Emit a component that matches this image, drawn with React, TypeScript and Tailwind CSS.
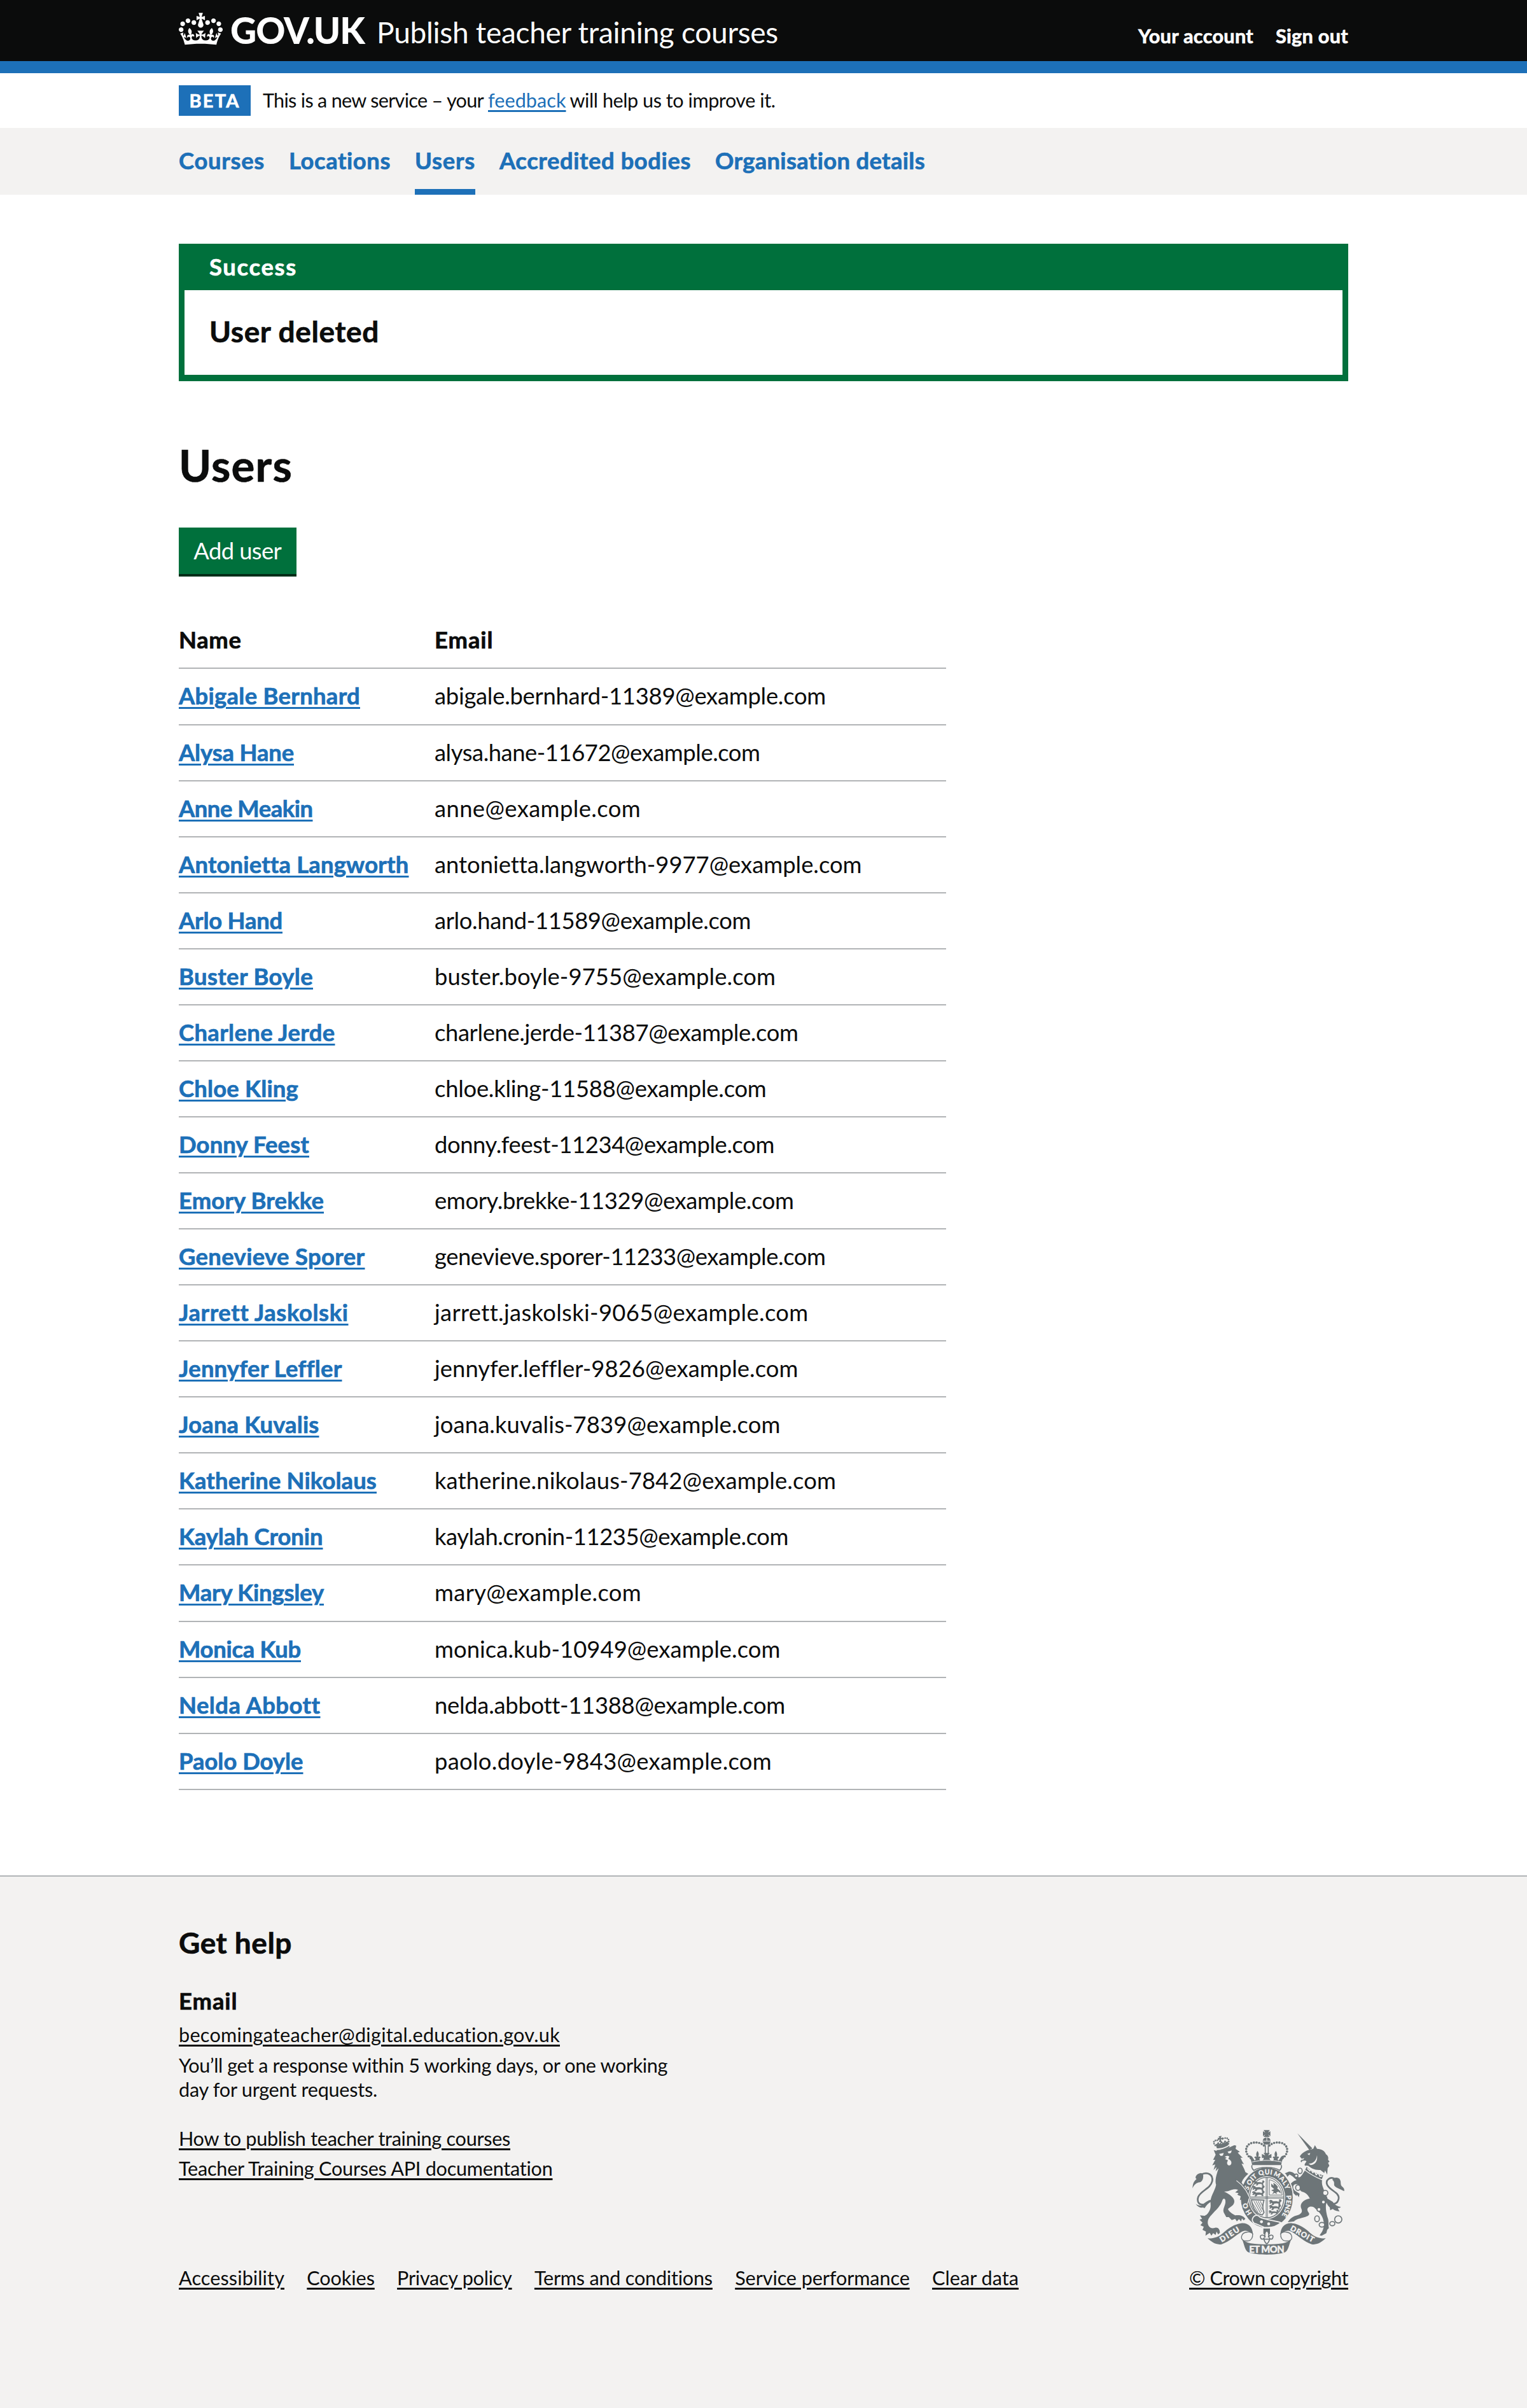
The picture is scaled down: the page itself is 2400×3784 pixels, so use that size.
import React, { useLayoutEffect, useRef, useState } from 'react';

/** Text whose letter spacing is worked out so that the line takes the given width. */
function Fit({ w, children, className = '' }: { w: number; children: string; className?: string }) {
  const ref = useRef<HTMLSpanElement>(null);
  const [spacing, setSpacing] = useState(0);
  useLayoutEffect(() => {
    const el = ref.current;
    if (!el) return;
    const natural = el.getBoundingClientRect().width - spacing * children.length;
    setSpacing((w - natural) / children.length);
  }, [w, children]);
  return (
    <span ref={ref} className={`whitespace-nowrap ${className}`} style={{ letterSpacing: `${spacing}px` }}>
      {children}
    </span>
  );
}

const underline = 'underline decoration-[2.5px] underline-offset-[4px]';
const bold = 'font-bold [-webkit-text-stroke:0.7px]';

const nav: [string, number][] = [
  ['Courses', 135],
  ['Locations', 160],
  ['Users', 95],
  ['Accredited bodies', 301],
  ['Organisation details', 330],
];

const users: [string, number, string, number][] = [
  ['Abigale Bernhard', 285, 'abigale.bernhard-11389@example.com', 615],
  ['Alysa Hane', 181, 'alysa.hane-11672@example.com', 511.5],
  ['Anne Meakin', 210.5, 'anne@example.com', 324],
  ['Antonietta Langworth', 361.5, 'antonietta.langworth-9977@example.com', 671.5],
  ['Arlo Hand', 163, 'arlo.hand-11589@example.com', 497],
  ['Buster Boyle', 211, 'buster.boyle-9755@example.com', 536],
  ['Charlene Jerde', 245.5, 'charlene.jerde-11387@example.com', 571.5],
  ['Chloe Kling', 188, 'chloe.kling-11588@example.com', 521.5],
  ['Donny Feest', 205, 'donny.feest-11234@example.com', 534],
  ['Emory Brekke', 228, 'emory.brekke-11329@example.com', 564.5],
  ['Genevieve Sporer', 292.5, 'genevieve.sporer-11233@example.com', 614.5],
  ['Jarrett Jaskolski', 266.5, 'jarrett.jaskolski-9065@example.com', 587.5],
  ['Jennyfer Leffler', 256.5, 'jennyfer.leffler-9826@example.com', 571.5],
  ['Joana Kuvalis', 220.5, 'joana.kuvalis-7839@example.com', 543.5],
  ['Katherine Nikolaus', 311, 'katherine.nikolaus-7842@example.com', 631],
  ['Kaylah Cronin', 226.5, 'kaylah.cronin-11235@example.com', 556],
  ['Mary Kingsley', 228, 'mary@example.com', 325],
  ['Monica Kub', 192, 'monica.kub-10949@example.com', 543.5],
  ['Nelda Abbott', 222.5, 'nelda.abbott-11388@example.com', 551],
  ['Paolo Doyle', 195.5, 'paolo.doyle-9843@example.com', 530],
];

const footerLinks: [string, number][] = [
  ['Accessibility', 166],
  ['Cookies', 106.5],
  ['Privacy policy', 180.5],
  ['Terms and conditions', 280],
  ['Service performance', 274.5],
  ['Clear data', 136],
];

function CrownLogo() {
  return (
    <svg viewBox="0 0 132 97" className="mt-[20px] h-[51px] w-[69px]" fill="currentColor" aria-hidden="true">
      <path
        fillRule="evenodd"
        d="M25 30.2c3.5 1.5 7.7-.2 9.1-3.7 1.5-3.6-.2-7.8-3.9-9.2-3.6-1.4-7.6.3-9.1 3.9-1.4 3.5.3 7.5 3.9 9zM9 39.5c3.6 1.5 7.8-.2 9.2-3.7 1.5-3.6-.2-7.8-3.9-9.1-3.6-1.5-7.6.2-9.1 3.8-1.4 3.5.3 7.5 3.8 9zM4.4 57.2c3.5 1.5 7.7-.2 9.1-3.8 1.5-3.6-.2-7.7-3.9-9.1-3.5-1.5-7.6.3-9.1 3.8-1.4 3.5.3 7.6 3.9 9.1zm38.3-21.4c3.5 1.5 7.7-.2 9.1-3.8 1.5-3.6-.2-7.7-3.9-9.1-3.6-1.5-7.6.3-9.1 3.8-1.3 3.6.4 7.7 3.9 9.1zm64.4-5.6c-3.6 1.5-7.8-.2-9.1-3.7-1.5-3.6.2-7.8 3.8-9.2 3.6-1.4 7.7.3 9.2 3.9 1.3 3.5-.4 7.5-3.9 9zm15.9 9.3c-3.6 1.5-7.7-.2-9.1-3.7-1.5-3.6.2-7.8 3.7-9.1 3.6-1.5 7.7.2 9.2 3.8 1.5 3.5-.3 7.5-3.8 9zm4.7 17.7c-3.6 1.5-7.8-.2-9.2-3.8-1.5-3.6.2-7.7 3.9-9.1 3.6-1.5 7.7.3 9.2 3.8 1.3 3.5-.4 7.6-3.9 9.1zM89.3 35.8c-3.6 1.5-7.8-.2-9.2-3.8-1.4-3.6.2-7.7 3.9-9.1 3.6-1.5 7.7.3 9.2 3.8 1.4 3.6-.3 7.7-3.9 9.1zM69.7 17.7l8.9 4.7V9.3l-8.9 2.8c-.2-.3-.5-.6-.9-.9L72.4 0H59.6l3.5 11.2c-.3.3-.6.5-.9.9l-8.8-2.8v13.1l8.8-4.7c.3.3.6.7.9.9l-5 15.4v.1c-.2.8-.4 1.6-.4 2.4 0 4.1 3.1 7.5 7 8.1h.2c.3 0 .7.1 1 .1.4 0 .7 0 1-.1h.2c4-.6 7.1-4.1 7.1-8.1 0-.8-.1-1.7-.4-2.4V34l-5.1-15.4c.4-.2.7-.6 1-.9zM66 92.8c16.9 0 32.8 1.1 47.1 3.2 4-16.9 8.9-26.7 14-33.5l-9.6-3.4c1 4.9 1.1 7.2 0 10.2-1.5-1.4-3-4.3-4.2-8.7L108.6 76c2.8-2 5-3.2 7.5-3.3-4.4 9.4-10 11.9-13.6 11.2-4.3-.8-6.3-4.6-5.6-7.9 1-4.7 5.7-5.9 8-.5 4.3-8.7-3-11.4-7.6-8.8 7.1-7.2 7.9-13.5 2.1-21.1-8 6.1-8.1 12.3-4.5 20.8-4.7-5.4-12.1-2.5-9.5 6.2 3.4-5.2 7.9-2 7.2 3.1-.6 4.3-6.4 7.8-13.5 7.2-10.3-.9-10.9-8-11.2-13.8 2.5-.5 7.1 1.8 11 7.3L80.2 60c-4.1 4.4-8 5.3-12.3 5.4 1.4-4.4 8-11.6 8-11.6H55.5s6.4 7.2 7.9 11.6c-4.2-.1-8-1-12.3-5.4l1.4 16.4c3.9-5.5 8.5-7.7 10.9-7.3-.3 5.8-.9 12.8-11.1 13.8-7.2.6-12.9-2.9-13.5-7.2-.7-5 3.8-8.3 7.1-3.1 2.7-8.7-4.6-11.6-9.4-6.2 3.7-8.5 3.6-14.7-4.6-20.8-5.8 7.6-5 13.9 2.2 21.1-4.7-2.6-11.9.1-7.7 8.8 2.3-5.5 7.1-4.2 8.1.5.7 3.3-1.3 7.1-5.7 7.9-3.5.7-9-1.8-13.5-11.2 2.5.1 4.7 1.3 7.5 3.3l-4.7-15.4c-1.2 4.4-2.7 7.2-4.3 8.7-1.1-3-.9-5.3 0-10.2l-9.5 3.4c5 6.9 9.9 16.7 14 33.5 14.8-2.1 30.8-3.2 47.7-3.2z"
      />
    </svg>
  );
}

const INK = '#6d7578';
const PAPER = '#f3f2f1';

/** Half of the imperial crown; the other half is its mirror image. */
function HalfCrown() {
  return (
    <g>
      <path d="M377 214C345 190 350 150 385 142C412 136 432 146 442 158" fill="none" stroke={INK} strokeWidth="11" strokeLinecap="round" strokeDasharray="0 12.6" />
      <path d="M366 202C376 200 384 204 388 214L396 226C402 222 402 214 394 212C396 204 402 206 405 208C402 198 402 190 409 180C417 190 416 198 413 208C418 204 423 206 424 212C416 214 417 224 426 226C436 226 440 218 438 212L430 214V194L446 202L438 190H453V247H384C382 230 376 214 366 202Z" fill={INK} />
      <path d="M384 247C380 254 384 264 392 272C402 264 424 258 453 258" fill="none" stroke={INK} strokeWidth="5" />
    </g>
  );
}

function HalfRibbon() {
  return (
    <g>
      <path d="M174 592C200 594 226 586 248 566C274 542 300 526 332 521C366 518 386 538 388 574C374 558 352 550 334 562C302 580 278 608 240 620C212 624 194 610 174 592Z" fill={INK} />
      <path d="M388 574C386 558 338 556 334 584C332 604 350 606 366 604C380 602 388 588 386 572" fill="none" stroke={INK} strokeWidth="4" />
      <path d="M336 594C346 606 360 612 378 616C402 620 428 621 453 621V669C420 669 388 666 366 658C350 650 348 624 336 594Z" fill={INK} />
    </g>
  );
}

function Passant({ x, y, s = 1 }: { x: number; y: number; s?: number }) {
  return (
    <path
      transform={`translate(${x} ${y}) scale(${s})`}
      d="M0 6L6 1L14 3L18 8L34 7L44 10L50 4L46 0L54 -2L58 4L54 9L50 14L52 22L46 22L45 16L36 15L24 16L20 23L12 23L17 17L12 13L6 17L2 15L8 9Z"
      fill={INK}
      stroke={INK}
      strokeWidth="2.5"
    />
  );
}

function RoyalArms() {
  return (
    <svg viewBox="87 75 750 600" className="h-[200px] w-[250px]" aria-hidden="true">
      {/* lion */}
      <g fill={INK}>
        <path d="M203 176L217 180C240 178 266 170 288 158L300 153L309 155L306 170C318 178 322 182 327 184L316 188C326 198 332 206 340 212L329 212C336 226 340 236 346 242L334 240C342 256 348 266 352 280L366 288C352 300 340 312 334 330L346 350L360 372L368 388L364 404L358 400L360 424L350 408L346 424L338 408L330 412L334 392L318 388L328 380L304 376L318 364C302 356 286 364 270 370L252 372C278 384 300 400 300 418C300 436 284 442 270 454C276 468 290 476 304 484C324 480 344 486 352 500L344 508L336 498L332 512L322 502L312 512L304 500L288 506L274 492L262 492L250 470C244 456 256 440 258 424C260 404 250 400 244 412C236 440 214 458 192 482C178 496 170 512 178 532C186 546 198 546 210 542C224 540 232 550 232 566L224 574L216 560L212 576L200 568L192 580L184 566L164 580L166 560L150 552L156 538L140 530L150 518L136 504L148 500L138 484L160 486L170 480C184 466 190 450 188 430C184 396 208 372 214 340C208 320 214 296 226 262L212 276L216 256L202 270L210 244L196 248L210 222L200 222L212 198Z" />
        <path d="M215 160L212 148C230 150 252 146 270 134L272 152C256 164 234 168 218 168Z" />
        <path d="M216 176C236 176 258 168 276 156L278 162C260 174 238 180 218 181Z" />
        <path d="M226 112L240 109L236 120L246 116V128L236 124L240 138H228L231 126L222 130V118L230 120Z" />
        <path d="M103 356C104 330 112 322 122 312C112 308 118 288 142 284L152 288C156 304 152 322 138 328C120 330 110 340 103 356Z" />
        <path d="M118 430C128 438 140 440 148 434C160 424 178 412 188 410L190 420C178 426 168 436 160 450C154 448 150 444 148 448C136 448 126 442 118 430Z" />
      </g>
      <path d="M210 154C196 138 204 128 226 130M272 146C278 124 268 114 246 122" fill="none" stroke={INK} strokeWidth="8" strokeLinecap="round" strokeDasharray="0 9.5" />
      <path d="M216 154L224 142L230 152L240 138L248 148L256 134L264 142" fill="none" stroke={INK} strokeWidth="5" />
      <path d="M146 290C176 278 200 292 196 322C188 358 144 366 130 396C122 420 134 436 154 432" fill="none" stroke={INK} strokeWidth="8" />
      <g fill={PAPER}>
        <path d="M228 194L250 190L246 202L236 204Z" />
        <path d="M268 184L288 178L284 190L274 192Z" />
        <path d="M254 208C262 202 272 202 276 206L272 218C284 222 290 234 284 244C276 254 264 246 266 234L270 224L256 218L264 212Z" />
      </g>

      {/* unicorn */}
      <path d="M597 97L668 168L654 176Z" fill={INK} />
      <g fill={INK}>
        <path d="M609 206C616 192 632 182 648 176L672 170L680 153L690 170C712 170 728 182 732 196C744 204 744 214 742 222L749 230L742 236L748 250L740 262L738 292L728 272L724 284L706 270C680 272 662 262 648 250L634 250C628 246 634 238 640 230C636 222 628 228 622 226L616 234L612 228L620 220Z" />
        <path d="M634 270C660 288 688 304 714 318C710 336 718 352 724 368L734 392C744 402 736 420 732 434C730 456 736 484 742 500C746 516 742 530 746 544L738 552L734 568L712 580L702 578L714 560C724 540 724 520 718 500C710 474 690 460 676 446C656 436 634 450 650 470C660 482 644 490 624 494C600 500 588 504 582 512L552 516C562 500 576 488 596 484C612 478 624 470 616 452C606 430 624 410 656 404C648 388 634 374 618 372C606 364 600 352 604 340C592 336 584 334 578 346C576 358 582 368 596 374L608 382L604 398L596 386L592 392L580 380L570 366L560 348C564 332 580 320 594 318C584 308 572 296 560 292L550 302L544 290L538 286L556 278C574 276 588 290 602 304C612 308 620 292 634 270Z" />
        <path d="M738 404C728 420 740 436 750 446L752 460L764 454C776 464 790 464 796 466L788 450C796 450 800 448 802 444C780 440 770 430 764 420Z" />
        <path d="M762 316C766 306 784 302 796 312C806 326 798 334 806 346C816 354 820 360 818 370C806 362 782 356 772 344C768 338 776 328 762 316Z" />
      </g>
      <path d="M774 312C752 298 728 318 738 340C752 368 796 376 792 404C788 428 770 436 748 424" fill="none" stroke={INK} strokeWidth="8" />
      <path d="M640 252C662 274 690 286 722 294L714 316C682 304 656 288 632 270Z" fill={INK} stroke={PAPER} strokeWidth="4" />
      <path d="M644 262L656 274L660 266L670 282L678 276L686 292L696 284L704 300L714 298" fill="none" stroke={PAPER} strokeWidth="5" />
      <path d="M650 240C672 240 688 224 690 200C693 222 686 244 660 247Z" fill={PAPER} />
      <path d="M644 194L658 190L654 200ZM612 218L630 214L624 222Z" fill={PAPER} />
      <g fill={PAPER} stroke={INK} strokeWidth="5">
        <ellipse cx="610" cy="274" rx="10" ry="13" />
        <circle cx="592" cy="297" r="8" />
        <ellipse cx="600" cy="353" rx="11" ry="13" />
        <circle cx="729" cy="378" r="12" />
        <circle cx="720" cy="421" r="9" />
        <circle cx="699" cy="456" r="9" />
        <ellipse cx="690" cy="500" rx="11" ry="14" />
        <ellipse cx="713" cy="528" rx="13" ry="11" />
        <ellipse cx="762" cy="523" rx="12" ry="10" />
        <circle cx="790" cy="503" r="17" />
      </g>

      {/* garter and shield */}
      <ellipse cx="453" cy="400" rx="125" ry="144" fill={INK} stroke={PAPER} strokeWidth="5" />
      <ellipse cx="453" cy="400" rx="87" ry="101" fill={PAPER} />
      <ellipse cx="453" cy="400" rx="81" ry="95" fill="none" stroke={INK} strokeWidth="4" />
      <path d="M450 305V495M456 305V495M372 397H534M372 403H534" stroke={INK} strokeWidth="3" fill="none" />
      <Passant x={392} y={322} s={0.85} />
      <Passant x={384} y={345} />
      <Passant x={384} y={370} />
      <Passant x={464} y={411} />
      <Passant x={464} y={435} s={0.95} />
      <Passant x={462} y={460} s={0.8} />
      <path d="M465 316C498 322 520 350 526 388H465Z" fill="none" stroke={INK} strokeWidth="3" />
      <path d="M474 334L486 344L484 330L496 338L506 350L502 356L516 368L520 382L508 372L498 376L502 384L490 378L478 384L486 372L474 366L488 360L474 348Z" fill={INK} />
      <path d="M381 410C386 450 402 478 432 482L440 470C430 448 434 430 440 412Z" fill="none" stroke={INK} strokeWidth="5" />
      <path d="M392 416L424 474M402 416L430 468M412 416L432 456M422 416L434 442M384 424L412 470" stroke={INK} strokeWidth="3" />
      <g fill={PAPER} stroke={PAPER} strokeWidth="0.8" fontFamily="Lato, sans-serif" fontWeight="900" fontSize="31">
        <text transform="translate(383 474) rotate(-122)">H</text>
        <text transform="translate(367 448) rotate(-108)">O</text>
        <text transform="translate(366 366) rotate(-68)">S</text>
        <text transform="translate(374 344) rotate(-57)">O</text>
        <text transform="translate(388 322) rotate(-46)">I</text>
        <text transform="translate(394 315) rotate(-38)">T</text>
        <text transform="translate(417 297) rotate(-16)">Q</text>
        <text transform="translate(443 290) rotate(0)">U</text>
        <text transform="translate(468 291) rotate(9)">I</text>
        <text transform="translate(484 295) rotate(26)">M</text>
        <text transform="translate(510 312) rotate(42)">A</text>
        <text transform="translate(526 330) rotate(54)">L</text>
        <text transform="translate(535 344) rotate(66)">Y</text>
        <text transform="translate(545 390) rotate(87)">P</text>
        <text transform="translate(546 411) rotate(95)">E</text>
        <text transform="translate(544 429) rotate(102)">N</text>
        <text transform="translate(539 452) rotate(110)">S</text>
        <text transform="translate(532 469) rotate(118)">E</text>
      </g>
      <path d="M388 494C398 480 412 480 420 492C448 506 490 508 520 518C500 536 470 544 440 540L402 524C388 522 380 506 388 494Z" fill={INK} stroke={PAPER} strokeWidth="5" />
      <circle cx="428" cy="514" r="7" fill={PAPER} />
      <circle cx="462" cy="524" r="7" fill={PAPER} />

      {/* lion foreleg over the garter */}
      <path d="M304 310L330 324L350 350L366 380L373 398L364 412L360 428L350 414L344 426L336 408L326 412L330 394L314 386L322 376Z" fill={INK} />
      <path d="M310 320L334 340L356 368L372 400L362 430" fill="none" stroke={PAPER} strokeWidth="3.5" />

      {/* pendant */}
      <path d="M437 546H468V572H437Z" fill={INK} />
      <path d="M453 554C464 566 464 578 460 588C468 572 486 574 482 588C480 598 470 598 466 592C466 606 458 616 453 618C448 616 440 606 440 592C436 598 426 598 423 588C420 574 438 572 446 588C442 578 442 566 453 554Z" fill={PAPER} stroke={INK} strokeWidth="5" />
      <path d="M436 596H470" stroke={INK} strokeWidth="5" />

      {/* crown */}
      <path d="M384 247C378 256 384 266 392 274C430 254 476 254 512 274C522 266 526 256 522 247Z" fill={PAPER} />
      <HalfCrown />
      <g transform="translate(905 0) scale(-1 1)">
        <HalfCrown />
      </g>
      <path d="M438 82H467L459 94L470 87V111L459 102L467 114H438L446 102L435 111V87L446 94Z" fill={INK} />
      <path d="M434 136C434 122 442 116 453 116C464 116 471 122 471 136L466 150H440Z" fill={INK} />
      <path d="M434 134H471M453 116V134" stroke={PAPER} strokeWidth="3" />
      <path d="M446 152V192M460 152V192" stroke={INK} strokeWidth="5" />
      <path d="M384 232C430 222 476 222 522 232" fill="none" stroke={PAPER} strokeWidth="3" />

      {/* ribbon */}
      <HalfRibbon />
      <g transform="translate(905 0) scale(-1 1)">
        <HalfRibbon />
      </g>
      <g fill={PAPER} stroke={PAPER} strokeWidth="1.2" fontFamily="Lato, sans-serif" fontWeight="900">
        <text transform="translate(241 611) rotate(-32)" fontSize="36" textLength="102">DIEU</text>
        <text x="370" y="659" fontSize="44" textLength="166">ET MON</text>
        <text transform="translate(561 552) rotate(29)" fontSize="35" textLength="122">DROIT</text>
      </g>
    </svg>
  );
}

export default function App() {
  return (
    <div className="flex min-h-[3784px] w-[2400px] flex-col bg-white font-['Lato',sans-serif] text-[36.4px] text-[#0b0c0c] [font-variant-ligatures:none]">
      <header className="text-white">
        <div className="h-[96px] bg-[#0b0c0c]">
          <div className="mx-auto flex w-[1838px] items-start">
            <CrownLogo />
            <Fit w={211} className="ml-[12px] pt-[17px] text-[57px] leading-[60px] font-black">GOV.UK</Fit>
            <Fit w={631} className="ml-[19px] pt-[21px] text-[46px] leading-[60px]">Publish teacher training courses</Fit>
            <div className={`ml-auto flex gap-[35px] pt-[37px] text-[30.6px] leading-[40px] ${bold}`}>
              <Fit w={181}>Your account</Fit>
              <Fit w={114}>Sign out</Fit>
            </div>
          </div>
        </div>
        <div className="h-[19px] bg-[#1d70b8]" />
      </header>

      <div className="mx-auto flex h-[86px] w-[1838px] items-start pt-[19px]">
        <strong className={`flex h-[48px] w-[113px] justify-center bg-[#1d70b8] text-[29px] leading-[48px] text-white ${bold}`}>
          <Fit w={80}>BETA</Fit>
        </strong>
        <p className="ml-[19px] flex text-[30.6px] leading-[48px]">
          <Fit w={347}>This is a new service – your</Fit>
          <a className={`ml-[7px] text-[#1d70b8] ${underline}`}>
            <Fit w={122.5}>feedback</Fit>
          </a>
          <Fit w={323} className="ml-[6px]">will help us to improve it.</Fit>
        </p>
      </div>

      <nav className="h-[105px] bg-[#f3f2f1]">
        <ul className={`mx-auto flex w-[1838px] gap-[38px] leading-[103px] text-[#1d70b8] ${bold}`}>
          {nav.map(([label, w]) => (
            <li key={label} className={label === 'Users' ? 'h-[105px] border-b-9 border-[#1d70b8]' : 'h-[105px]'}>
              <Fit w={w}>{label}</Fit>
            </li>
          ))}
        </ul>
      </nav>

      <main className="mx-auto w-[1838px] pt-[77px]">
        <section className="border-x-9 border-b-10 border-[#00703c]">
          <div className={`h-[73px] bg-[#00703c] pl-[39px] leading-[73px] text-white ${bold}`}>
            <Fit w={138}>Success</Fit>
          </div>
          <div className={`h-[133px] pl-[39px] text-[46px] leading-[130px] ${bold}`}>
            <Fit w={267}>User deleted</Fit>
          </div>
        </section>

        <h1 className={`mt-[92px] text-[69px] leading-[80px] ${bold}`}>
          <Fit w={179}>Users</Fit>
        </h1>

        <button className="mt-[58px] flex h-[77px] w-[184.5px] justify-center border-b-4 border-[#002d18] bg-[#00703c] leading-[73px] text-white">
          <Fit w={138}>Add user</Fit>
        </button>

        <table className="mt-[57.4px] block w-[1206px] text-left leading-[84px]">
          <thead className="block">
            <tr className={`grid h-[88.07px] grid-cols-[402px_1fr] border-b-2 border-[#b1b4b6] ${bold}`}>
              <th><Fit w={98.5}>Name</Fit></th>
              <th><Fit w={92.5}>Email</Fit></th>
            </tr>
          </thead>
          <tbody className="block">
            {users.map(([name, nw, email, ew]) => (
              <tr key={name} className="grid h-[88.07px] grid-cols-[402px_1fr] border-b-2 border-[#b1b4b6]">
                <td className={`text-[#1d70b8] ${bold}`}>
                  <a className={underline}><Fit w={nw}>{name}</Fit></a>
                </td>
                <td><Fit w={ew}>{email}</Fit></td>
              </tr>
            ))}
          </tbody>
        </table>
      </main>

      <footer className="mt-[134px] flex-1 border-t-2 border-[#b1b4b6] bg-[#f3f2f1] pt-[74px] text-[30.6px] leading-[38px]">
        <div className="mx-auto flex w-[1838px] items-end justify-between">
          <div>
            <h2 className={`text-[46px] leading-[60px] ${bold}`}><Fit w={178}>Get help</Fit></h2>
            <h3 className={`mt-[39px] text-[36.4px] leading-[44px] ${bold}`}><Fit w={92.5}>Email</Fit></h3>
            <p className="mt-[13px]">
              <a className={underline}><Fit w={599}>becomingateacher@digital.education.gov.uk</Fit></a>
            </p>
            <p className="mt-[10px] flex flex-col items-start">
              <Fit w={768}>You’ll get a response within 5 working days, or one working</Fit>
              <Fit w={312}>day for urgent requests.</Fit>
            </p>
            <p className="mt-[39px]">
              <a className={underline}><Fit w={521}>How to publish teacher training courses</Fit></a>
            </p>
            <p className="mt-[9px]">
              <a className={underline}><Fit w={587.5}>Teacher Training Courses API documentation</Fit></a>
            </p>
            <ul className="mt-[134.5px] flex gap-[35.3px]">
              {footerLinks.map(([label, w]) => (
                <li key={label} className={underline}><Fit w={w}>{label}</Fit></li>
              ))}
            </ul>
          </div>
          <div className="flex w-[250px] flex-col gap-[16.5px]">
            <RoyalArms />
            <a className={underline}><Fit w={250}>© Crown copyright</Fit></a>
          </div>
        </div>
      </footer>
    </div>
  );
}
